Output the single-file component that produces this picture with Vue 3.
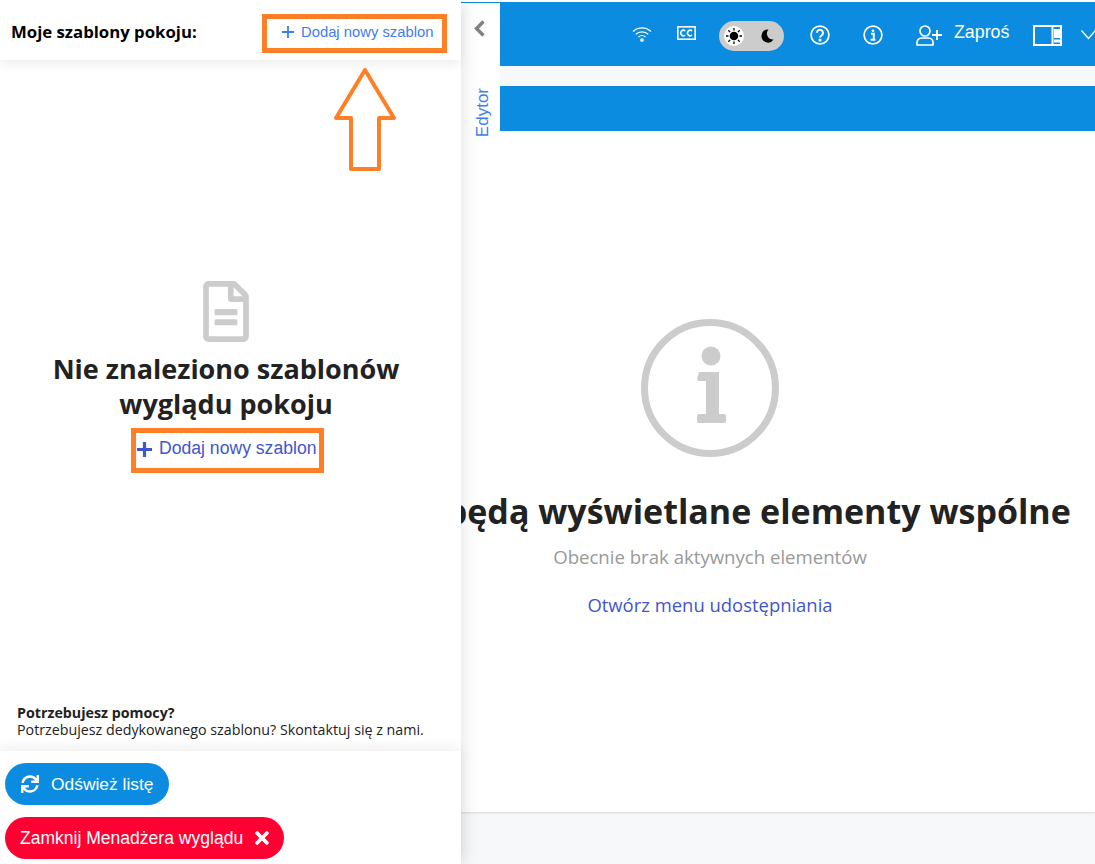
<script setup>
const helpTitle = 'Potrzebujesz pomocy?'
const helpText = 'Potrzebujesz dedykowanego szablonu? Skontaktuj się z nami.'
</script>

<template>
  <div class="page">
    <aside class="panel">
      <header class="panel-head">
        <span class="panel-title">Moje szablony pokoju:</span>
        <a class="add-top">
          <svg width="12" height="12" viewBox="0 0 12 12"><path d="M6 0v12M0 6h12" stroke="#3f7cee" stroke-width="1.8" fill="none" /></svg>
          Dodaj nowy szablon
        </a>
      </header>

      <svg class="arrow" width="66" height="106" viewBox="0 0 66 106">
        <path d="M32 4 L61 52 H46 V103 H18 V52 H3 Z" fill="#fff" stroke="#ff7f27" stroke-width="4" stroke-linejoin="round" />
      </svg>

      <div class="panel-body">
        <div class="empty">
          <svg class="doc" width="46" height="61" viewBox="0 0 384 512">
            <path fill="#ccc" d="M288 248v28c0 6.600-5.400 12-12 12H108c-6.600 0-12-5.400-12-12v-28c0-6.600 5.400-12 12-12h168c6.600 0 12 5.400 12 12zm-12 72H108c-6.600 0-12 5.400-12 12v28c0 6.600 5.400 12 12 12h168c6.600 0 12-5.400 12-12v-28c0-6.600-5.400-12-12-12zm108-188.100V464c0 26.500-21.500 48-48 48H48c-26.500 0-48-21.500-48-48V48C0 21.500 21.500 0 48 0h204.100C264.800 0 277 5.100 286 14.100L369.900 98c9 8.900 14.100 21.200 14.100 33.900zm-128-80V128h76.100L256 51.900zM336 464V176H232c-13.300 0-24-10.700-24-24V48H48v416h288z" />
          </svg>
          <h2 class="empty-title">Nie znaleziono szablonów<br />wyglądu pokoju</h2>
          <a class="add-main">
            <svg width="15" height="15" viewBox="0 0 15 15"><path d="M7.500 0v15M0 7.500h15" stroke="#3f56cc" stroke-width="3.200" fill="none" /></svg>
            Dodaj nowy szablon
          </a>
        </div>
        <div class="help">
          <strong>{{ helpTitle }}</strong>
          <span>{{ helpText }}</span>
        </div>
      </div>

      <footer class="panel-foot">
        <button class="btn btn-blue">
          <svg width="18" height="18" viewBox="0 0 512 512">
            <path fill="#fff" d="M440.650 12.570l4 82.770A247.160 247.160 0 0 0 255.830 8C134.730 8 33.910 94.920 12.290 209.820A12 12 0 0 0 24.090 224h49.050a12 12 0 0 0 11.670-9.260 175.910 175.910 0 0 1 317-56.940l-101.460-4.860a12 12 0 0 0-12.570 12v47.410a12 12 0 0 0 12 12H500a12 12 0 0 0 12-12V12a12 12 0 0 0-12-12h-47.370a12 12 0 0 0-11.980 12.570zM255.830 432a175.610 175.610 0 0 1-146-77.800l101.800 4.870a12 12 0 0 0 12.570-12v-47.400a12 12 0 0 0-12-12H12a12 12 0 0 0-12 12V500a12 12 0 0 0 12 12h47.350a12 12 0 0 0 12-12.600l-4.150-82.570A247.170 247.170 0 0 0 255.830 504c121.110 0 221.930-86.920 243.550-201.820a12 12 0 0 0-11.800-14.180h-49.050a12 12 0 0 0-11.670 9.260A175.860 175.860 0 0 1 255.830 432z" />
          </svg>
          Odśwież listę
        </button>
        <button class="btn btn-red">
          Zamknij Menadżera wyglądu
          <svg width="14" height="20" viewBox="0 0 352 512">
            <path fill="#fff" d="M242.720 256l100.070-100.070c12.280-12.280 12.280-32.190 0-44.480l-22.240-22.240c-12.280-12.280-32.190-12.280-44.480 0L176 189.280 75.930 89.210c-12.280-12.280-32.190-12.280-44.480 0L9.210 111.450c-12.280 12.280-12.280 32.190 0 44.480L109.280 256 9.210 356.070c-12.280 12.280-12.280 32.190 0 44.480l22.240 22.240c12.280 12.280 32.200 12.280 44.480 0L176 322.720l100.070 100.070c12.280 12.280 32.200 12.280 44.480 0l22.240-22.240c12.280-12.280 12.280-32.190 0-44.480L242.720 256z" />
          </svg>
        </button>
      </footer>
    </aside>

    <main class="stage">
      <div class="topbar">
        <svg class="i-wifi" width="20" height="16" viewBox="0 0 20 16" fill="none" stroke="#fff" stroke-width="1.300">
          <path d="M1 5.500a13 13 0 0 1 18 0M3.800 8.300a9 9 0 0 1 12.400 0M6.500 11a5.200 5.200 0 0 1 7 0" />
          <circle cx="10" cy="14" r="1.200" />
        </svg>
        <svg class="i-cc" width="19" height="14" viewBox="0 0 19 14" fill="none" stroke="#fff">
          <rect x="0.800" y="0.800" width="17.400" height="12.400" stroke-width="1.600" />
          <path d="M8.300 5a2.700 2.700 0 1 0 0 4M15 5a2.700 2.700 0 1 0 0 4" stroke-width="1.500" />
        </svg>
        <div class="theme">
          <span class="sun">
            <svg width="18" height="18" viewBox="0 0 18 18">
              <circle cx="9" cy="9" r="4.300" fill="#000" />
              <path d="M9 1v2.500M9 14.500V17M1 9h2.500M14.500 9H17M3.300 3.300l1.800 1.800M12.900 12.900l1.800 1.800M3.300 14.700l1.800-1.800M12.900 5.100l1.800-1.800" stroke="#000" stroke-width="1.300" />
            </svg>
          </span>
          <svg class="moon" width="14" height="14" viewBox="0 0 14 14"><path d="M8.500 0.500A6.500 6.500 0 1 0 13.500 10.500 6 6 0 0 1 8.500 0.500z" fill="#000" /></svg>
        </div>
        <svg class="i-help" width="20" height="20" viewBox="0 0 20 20" fill="none" stroke="#fff" stroke-width="1.700">
          <circle cx="10" cy="10" r="8.900" />
          <path d="M7 7.800a3 3 0 1 1 4.600 2.500c-1 .6-1.600 1.100-1.600 2.200" stroke-width="2" />
          <circle cx="10" cy="15" r="0.700" />
        </svg>
        <svg class="i-info" width="20" height="20" viewBox="0 0 20 20" fill="none" stroke="#fff" stroke-width="1.700">
          <circle cx="10" cy="10" r="8.900" />
          <circle cx="10" cy="5.800" r="1.400" fill="#fff" stroke="none" />
          <path d="M8 8.800h2.800v5.700M7.600 14.800h4.800" stroke-width="2" />
        </svg>
        <svg class="i-user" width="26" height="21" viewBox="0 0 26 21" fill="none" stroke="#fff" stroke-width="1.700">
          <circle cx="9" cy="6" r="5" />
          <path d="M1 20v-2.500A4.500 4.500 0 0 1 5.500 13h7a4.500 4.500 0 0 1 4.500 4.500V20z" stroke-linejoin="round" />
          <path d="M16 10h10M21 5v10" stroke-width="2" />
        </svg>
        <span class="invite">Zaproś</span>
        <svg class="i-layout" width="29" height="21" viewBox="0 0 29 21" fill="none" stroke="#fff" stroke-width="2">
          <rect x="1" y="1" width="27" height="19" />
          <path d="M19.500 1v19" />
          <path d="M21 4h6v9h-6zM21 14.500h6v3h-6z" fill="#fff" stroke="none" />
        </svg>
        <svg class="i-chevron" width="15" height="10" viewBox="0 0 15 10" fill="none" stroke="#fff" stroke-width="1.300"><path d="M0.500 0.500L7.500 8.500 14.500 0.500" /></svg>
      </div>
      <div class="strip"></div>
      <div class="subbar"></div>
      <section class="card">
        <svg class="big-info" width="138" height="138" viewBox="0 0 138 138">
          <circle cx="69" cy="69" r="65.500" fill="none" stroke="#ccc" stroke-width="7" />
          <circle cx="70" cy="37" r="9.500" fill="#ccc" />
          <path d="M58 53h20v42h5a2 2 0 0 1 2 2v5a2 2 0 0 1-2 2H58a2 2 0 0 1-2-2v-5a2 2 0 0 1 2-2h7V62h-7a2 2 0 0 1-2-2z" fill="#ccc" />
        </svg>
        <h1 class="msg-title">Tutaj będą wyświetlane elementy wspólne</h1>
        <p class="msg-sub">Obecnie brak aktywnych elementów</p>
        <a class="msg-link">Otwórz menu udostępniania</a>
      </section>
      <div class="tab">
        <svg class="tab-chevron" width="11" height="17" viewBox="0 0 11 17" fill="none" stroke="#808080" stroke-width="3.400"><path d="M9.500 1.500L2.500 8.500l7 7" /></svg>
        <span class="tab-label">Edytor</span>
      </div>
    </main>
  </div>
</template>

<style scoped>
.page {
  display: flex;
  height: 864px;
  width: 1095px;
  overflow: hidden;
  background: #f7f8fa;
  font-family: "Open Sans", sans-serif;
}

.panel {
  position: relative;
  z-index: 2;
  flex: 0 0 461px;
  display: flex;
  flex-direction: column;
  background: #fff;
  box-shadow: 0 0 20px rgba(0, 0, 0, 0.12);
}

.panel-head {
  height: 60px;
  box-sizing: border-box;
  padding: 0 14px 0 11px;
  display: flex;
  align-items: flex-start;
  justify-content: space-between;
  box-shadow: 0 4px 12px rgba(0, 0, 0, 0.07);
}

.panel-title {
  margin-top: 20px;
  font-size: 16.750px;
  line-height: 24px;
  font-weight: 700;
  color: #000;
}

.add-top {
  margin-top: 14px;
  width: 185px;
  height: 39px;
  box-sizing: border-box;
  border: 5px solid #ff7f27;
  padding: 0 6px 4px 15px;
  display: flex;
  align-items: center;
  gap: 7px;
  font-family: "Liberation Sans", sans-serif;
  font-size: 14.800px;
  color: #3f7cee;
  white-space: nowrap;
}

.arrow {
  position: absolute;
  left: 333px;
  top: 66px;
}

.panel-body {
  flex: 1;
  display: flex;
  flex-direction: column;
  padding: 221px 0 13px;
}

.empty {
  display: flex;
  flex-direction: column;
  align-items: center;
  padding-right: 9px;
}

.empty-title {
  margin: 9px 0 7px;
  font-size: 27px;
  line-height: 35px;
  font-weight: 700;
  text-align: center;
  color: #222;
}

.add-main {
  margin-left: 3px;
  width: 193px;
  height: 45px;
  box-sizing: border-box;
  border: 5px solid #ff7f27;
  display: flex;
  align-items: center;
  gap: 7px;
  padding: 0 0 4px 1px;
  font-family: "Liberation Sans", sans-serif;
  font-size: 17.600px;
  color: #3f56cc;
  white-space: nowrap;
}

.add-main svg {
  margin-top: 2px;
}

.help {
  margin-top: auto;
  padding-left: 17px;
  display: flex;
  flex-direction: column;
  font-size: 14.250px;
  line-height: 17px;
  color: #222;
}

.panel-foot {
  height: 113px;
  box-sizing: border-box;
  padding: 12px 5px 0;
  display: flex;
  flex-direction: column;
  align-items: flex-start;
  gap: 12px;
  box-shadow: 0 -3px 12px rgba(0, 0, 0, 0.07);
}

.btn {
  height: 42px;
  border: 0;
  border-radius: 21px;
  display: flex;
  align-items: center;
  gap: 12px;
  font-family: "Liberation Sans", sans-serif;
  color: #fff;
  white-space: nowrap;
}

.btn-blue {
  width: 164px;
  padding: 0 0 0 16px;
  font-size: 17.400px;
  background: #0c8ce0;
}

.btn-red {
  width: 279px;
  padding: 0 0 0 15px;
  font-size: 17.550px;
  background: #ff0033;
}

.stage {
  position: relative;
  flex: 1;
  min-width: 0;
  border-top: 2px solid #fff;
  overflow: hidden;
}

.topbar {
  height: 64px;
  background: #0c8ce0;
  display: flex;
  align-items: center;
  padding-left: 171px;
}

.topbar svg {
  flex: none;
}

.i-wifi { margin-top: -1px; }
.i-cc { margin-left: 25px; margin-top: -2px; }
.theme {
  margin-left: 23px;
  margin-top: 4px;
  width: 65px;
  height: 30px;
  border-radius: 15px;
  background: #ccc;
  display: flex;
  align-items: center;
  flex: none;
}
.sun {
  margin-left: 5px;
  width: 20px;
  height: 20px;
  border-radius: 50%;
  background: #fff;
  display: flex;
  align-items: center;
  justify-content: center;
}
.moon { margin-left: 16px; }
.i-help { margin-left: 26px; margin-top: 1px; }
.i-info { margin-left: 33px; margin-top: 1px; }
.i-user { margin-left: 33px; margin-top: 2px; }
.invite {
  margin-left: 12px;
  margin-top: -3px;
  font-family: "Liberation Sans", sans-serif;
  font-size: 17.800px;
  color: #fff;
}
.i-layout { margin-left: 24px; margin-top: 3px; }
.i-chevron { margin-left: 19px; margin-top: 1px; }

.strip {
  height: 20px;
  background: #f7f8fa;
}

.subbar {
  height: 45px;
  background: #0c8ce0;
}

.card {
  height: 681px;
  box-sizing: border-box;
  padding: 188px 136px 0 0;
  background: #fff;
  box-shadow: 0 1px 2px rgba(0, 0, 0, 0.12);
  display: flex;
  flex-direction: column;
  align-items: center;
}

.big-info {
  flex: none;
}

.msg-title {
  margin: 29px 0 0;
  font-size: 34px;
  line-height: 50px;
  font-weight: 700;
  color: #222;
  white-space: nowrap;
}

.msg-sub {
  margin: 7px 0 0;
  font-size: 18.600px;
  line-height: 28px;
  color: #999;
  white-space: nowrap;
}

.msg-link {
  margin-top: 20px;
  font-size: 18.450px;
  line-height: 28px;
  color: #3f56cc;
  white-space: nowrap;
}

.tab {
  position: absolute;
  left: 0;
  top: 1px;
  width: 39px;
  height: 175px;
  background: #fff;
  display: flex;
  flex-direction: column;
  align-items: center;
  padding-top: 17px;
  box-sizing: border-box;
}

.tab-chevron {
  margin-right: 3px;
}

.tab-label {
  margin: 51px 0 0 5px;
  writing-mode: vertical-rl;
  transform: rotate(180deg);
  font-family: "Liberation Sans", sans-serif;
  font-size: 17px;
  color: #3f7cee;
}
</style>
